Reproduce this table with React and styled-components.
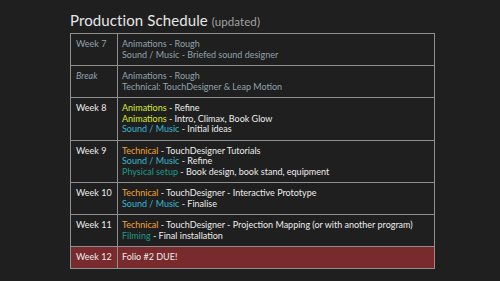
import React from "react";
import styled, { createGlobalStyle, css } from "styled-components";

const GlobalStyle = createGlobalStyle`
  html, body {
    margin: 0;
    padding: 0;
    background: #1f1f1f;
  }
  body {
    width: 500px;
    height: 281px;
    overflow: hidden;
    font-family: "Lato", "Liberation Sans", sans-serif;
  }
`;

const rows = [
  {
    week: "Week 7",
    muted: true,
    items: [
      [null, "Animations - Rough"],
      [null, "Sound / Music - Briefed sound designer"],
    ],
  },
  {
    week: "Break",
    muted: true,
    italic: true,
    items: [
      [null, "Animations - Rough"],
      [null, "Technical: TouchDesigner & Leap Motion"],
    ],
  },
  {
    week: "Week 8",
    items: [
      ["anim", "Animations", "Refine"],
      ["anim", "Animations", "Intro, Climax, Book Glow"],
      ["sound", "Sound / Music", "Initial ideas"],
    ],
  },
  {
    week: "Week 9",
    items: [
      ["tech", "Technical", "TouchDesigner Tutorials"],
      ["sound", "Sound / Music", "Refine"],
      ["phys", "Physical setup", "Book design, book stand, equipment"],
    ],
  },
  {
    week: "Week 10",
    items: [
      ["tech", "Technical", "TouchDesigner - Interactive Prototype"],
      ["sound", "Sound / Music", "Finalise"],
    ],
  },
  {
    week: "Week 11",
    items: [
      ["tech", "Technical", "TouchDesigner - Projection Mapping (or with another program)"],
      ["phys", "Filming", "Final installation"],
    ],
  },
  {
    week: "Week 12",
    due: true,
    items: [[null, "Folio #2 DUE!"]],
  },
];

const tagColors = {
  anim: "#d8ea2a",
  sound: "#33b9d2",
  tech: "#f0a23a",
  phys: "#1b9c86",
};

function App() {
  return (
    <Slide>
      <GlobalStyle />
      <Title>
        Production Schedule <Updated>(updated)</Updated>
      </Title>
      <Table>
        {rows.map((row, i) => (
          <Row key={i} $due={row.due} $last={i === rows.length - 1}>
            <WeekCell $muted={row.muted} $italic={row.italic}>
              {row.week}
            </WeekCell>
            <TaskCell $muted={row.muted}>
              {row.items.map((item, j) => (
                <Line key={j}>
                  {item[0] ? (
                    <>
                      <Tag $kind={item[0]}>{item[1]}</Tag> - {item[2]}
                    </>
                  ) : (
                    item[1]
                  )}
                </Line>
              ))}
            </TaskCell>
          </Row>
        ))}
      </Table>
    </Slide>
  );
}

const Slide = styled.div`
  width: 500px;
  height: 281px;
  box-sizing: border-box;
  padding: 11px 0 0 70px;
  display: flex;
  flex-direction: column;
`;

const Title = styled.div`
  font-size: 15px;
  line-height: 18px;
  color: #e6e6e6;
  height: 22px;
  letter-spacing: 0.1px;
`;

const Updated = styled.span`
  font-size: 11.5px;
  color: #a3a3a3;
`;

const Table = styled.div`
  width: 365px;
  box-sizing: border-box;
  border: 1.5px solid #8f8f8f;
  display: flex;
  flex-direction: column;
`;

const Row = styled.div`
  display: grid;
  grid-template-columns: 47px 1fr;
  border-bottom: 1.5px solid #8f8f8f;
  ${(p) => p.$last && css`border-bottom: none;`}
  ${(p) => p.$due && css`background: #782a2c;`}
`;

const WeekCell = styled.div`
  padding: 5px 0 4.6px 5px;
  border-right: 1.5px solid #8f8f8f;
  font-size: 9px;
  line-height: 10.7px;
  color: ${(p) => (p.$muted ? "#8fa3ad" : "#ececec")};
  ${(p) => p.$italic && css`font-style: italic;`}
`;

const TaskCell = styled.div`
  padding: 5px 0 4.6px 4px;
  font-size: 9px;
  line-height: 10.7px;
  color: ${(p) => (p.$muted ? "#8fa3ad" : "#ececec")};
`;

const Line = styled.div`
  white-space: nowrap;
`;

const Tag = styled.span`
  color: ${(p) => tagColors[p.$kind]};
`;

export default App;
